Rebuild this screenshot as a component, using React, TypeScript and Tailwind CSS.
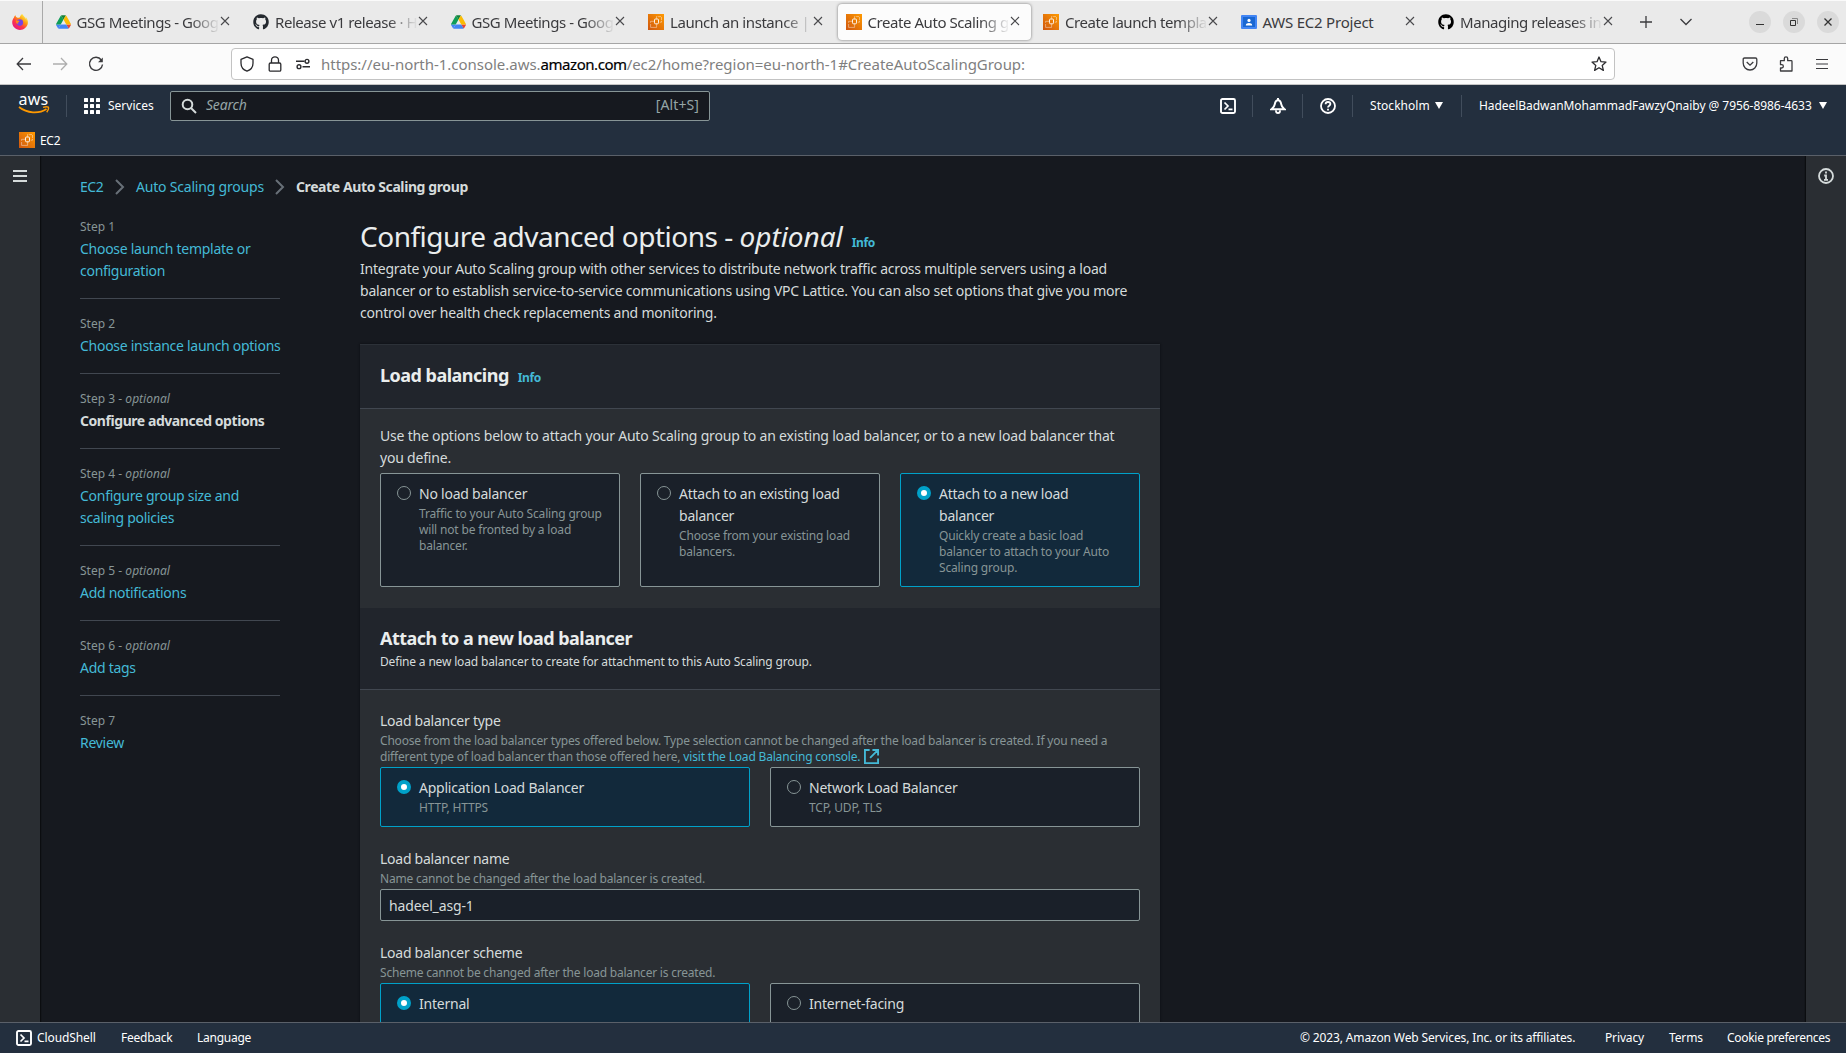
import React from 'react';
import { FaGithub } from 'react-icons/fa';

type IconProps = { className?: string };

function DriveIcon() {
  return (
    <svg viewBox="0 0 87.3 78" className="h-[14px] w-[15px] shrink-0">
      <path d="M6.6 66.85l3.85 6.65c.8 1.4 1.95 2.5 3.3 3.3L27.5 53H0c0 1.55.4 3.1 1.2 4.5z" fill="#4285f4" />
      <path d="M43.65 25L29.9 1.2c-1.35.8-2.5 1.9-3.3 3.3l-25.4 44A9 9 0 0 0 0 53h27.5z" fill="#0f9d58" />
      <path d="M73.55 76.8c1.35-.8 2.5-1.9 3.3-3.3l1.6-2.75L86.1 57.5c.8-1.4 1.2-2.95 1.2-4.5H59.8l5.85 11.5z" fill="#ea4335" />
      <path d="M43.65 25L57.4 1.2C56.05.4 54.5 0 52.9 0H34.4c-1.6 0-3.15.45-4.5 1.2z" fill="#188038" />
      <path d="M59.8 53H27.5L13.75 76.8c1.35.8 2.9 1.2 4.5 1.2h50.8c1.6 0 3.15-.45 4.5-1.2z" fill="#4285f4" />
      <path d="M73.4 26.5L60.7 4.5c-.8-1.4-1.95-2.5-3.3-3.3L43.65 25 59.8 53h27.45c0-1.55-.4-3.1-1.2-4.5z" fill="#fbbc04" />
    </svg>
  );
}

function Ec2Icon() {
  return (
    <svg viewBox="0 0 16 16" className="h-4 w-4 shrink-0">
      <defs>
        <linearGradient id="ec2" x1="0" y1="1" x2="1" y2="0">
          <stop offset="0" stopColor="#cf560f" />
          <stop offset="1" stopColor="#ff9a00" />
        </linearGradient>
      </defs>
      <rect width="16" height="16" fill="url(#ec2)" />
      <g fill="none" stroke="#fff">
        <rect x="6.500" y="5" width="4" height="4.800" rx="1" strokeWidth="0.900" />
        <path d="M8.500 4.800V2.600h5v5.600h-2.800" strokeWidth="0.600" opacity="0.700" strokeDasharray="3 0.800" />
        <path d="M6.300 7.300H2.600v1.500M2.600 10v3.400h6v-3.400" strokeWidth="0.600" opacity="0.700" />
      </g>
    </svg>
  );
}

function ClassroomIcon() {
  return (
    <svg viewBox="0 0 16 14" className="h-[14px] w-4 shrink-0">
      <rect width="16" height="14" rx="1" fill="#4285f4" />
      <rect x="2" y="2" width="12" height="10" fill="#1967d2" />
      <circle cx="8" cy="5.4" r="1.6" fill="#fff" />
      <path d="M4.8 10.4c0-1.7 1.6-2.4 3.2-2.4s3.2.7 3.2 2.4z" fill="#fff" />
    </svg>
  );
}

function FirefoxIcon() {
  return (
    <svg viewBox="0 0 16 16" className="h-4 w-4">
      <defs>
        <linearGradient id="fx" x1="0.85" y1="0.1" x2="0.2" y2="0.95">
          <stop offset="0" stopColor="#fff44f" />
          <stop offset="0.35" stopColor="#ff980e" />
          <stop offset="0.65" stopColor="#ff3647" />
          <stop offset="1" stopColor="#e31587" />
        </linearGradient>
      </defs>
      <path d="M15.3 5.4c-.4-.9-1.1-1.8-1.7-2.1.5 1 .8 1.9.9 2.6C13.600 3.700 12 2.800 10.700.800L10.200 0C8.600 1 8 2.500 7.800 3.500c-.6 0-1.200.200-1.700.4L4.600 3.300C4 3 3.600 2 3.500 1.300 2.600 1.900 2 3 1.900 3.700 1 4.700.300 6.300.2 8c-.2 4.300 3.400 7.900 7.800 7.900 4 0 7.700-3.200 7.900-7.200 0-1.100-.1-2.300-.6-3.300z" fill="url(#fx)" />
      <circle cx="7.800" cy="8.600" r="3.300" fill="#7542e5" />
      <path d="M4 6.200c1 .3 1.900.2 2.700.5 1 .3.600 1.200-.2 1.500-.7.200-.8.900 0 1.500-2 .4-3.200-1.400-2.500-3.500z" fill="#ff8a16" />
    </svg>
  );
}

function CloseX({ className = '' }: IconProps) {
  return (
    <svg viewBox="0 0 10 10" className={`h-[10px] w-[10px] shrink-0 ${className}`}>
      <path d="M1 1l8 8M9 1l-8 8" stroke="#4a4a4d" strokeWidth="1.100" fill="none" />
    </svg>
  );
}

function CloudShellIcon({ className = '' }: IconProps) {
  return (
    <svg viewBox="0 0 16 16" className={`h-4 w-4 shrink-0 ${className}`} fill="none" stroke="#fff" strokeWidth="2">
      <rect x="1" y="1" width="14" height="14" rx="1.500" strokeWidth="1.900" />
      <path d="M4.500 4.500L8 8l-3.500 3.500M8.500 11.300h4" strokeWidth="1.700" />
    </svg>
  );
}

const tabs: { icon: React.ReactNode; title: string; active?: boolean; fade?: boolean }[] = [
  { icon: <DriveIcon />, title: 'GSG Meetings - Goog', fade: true },
  { icon: <FaGithub className="h-4 w-4 shrink-0 text-[#24292f]" />, title: 'Release v1 release · H', fade: true },
  { icon: <DriveIcon />, title: 'GSG Meetings - Goog', fade: true },
  { icon: <Ec2Icon />, title: 'Launch an instance | E', fade: true },
  { icon: <Ec2Icon />, title: 'Create Auto Scaling g', active: true, fade: true },
  { icon: <Ec2Icon />, title: 'Create launch templa', fade: true },
  { icon: <ClassroomIcon />, title: 'AWS EC2 Project' },
  { icon: <FaGithub className="h-4 w-4 shrink-0 text-black" />, title: 'Managing releases in', fade: true },
];

function TabStrip() {
  return (
    <div className="flex h-[44px] shrink-0 border-t border-b border-t-[#fafafa] border-b-[#a5a5a5] bg-[#eaeaea] text-[15px] tracking-[-0.440px] text-[#3b3b3e]">
      <div className="flex w-[43px] shrink-0 items-center border-r border-[#a9a9a9] pl-3">
        <FirefoxIcon />
      </div>
      <div className="flex pl-[2.500px]">
        {tabs.map((t, i) => (
          <div key={i} className="flex w-[197.500px] shrink-0 px-[2px] pt-[3px] pb-[3px]">
            <div
              className={
                t.active
                  ? 'flex min-w-0 flex-1 items-center rounded bg-[#fcfcfc] pr-[11px] pl-2 shadow-[0_0_3px_rgba(0,0,0,0.5)]'
                  : 'flex min-w-0 flex-1 items-center pr-[11px] pl-2'
              }
            >
              {t.icon}
              <span
                className={
                  t.fade
                    ? 'ml-[6px] min-w-0 flex-1 leading-6 whitespace-nowrap [mask-image:linear-gradient(to_left,transparent,black_30px)]'
                    : 'ml-[6px] min-w-0 flex-1 leading-6 tracking-[-0.220px] whitespace-nowrap'
                }
              >
                {t.title}
              </span>
              <CloseX className="mb-[2px]" />
            </div>
          </div>
        ))}
      </div>
      <svg viewBox="0 0 14 14" className="mt-[14px] ml-[13px] h-[14px] w-[14px]">
        <path d="M7 1v12M1 7h12" stroke="#3b3b3e" strokeWidth="1.300" />
      </svg>
      <svg viewBox="0 0 14 14" className="mt-[14px] ml-[26px] h-[14px] w-[14px]">
        <path d="M1.500 4L7 9.500 12.500 4" stroke="#3b3b3e" strokeWidth="1.300" fill="none" />
      </svg>
      <div className="mt-[10px] mr-[7px] ml-auto flex gap-3">
        <span className="flex h-[22px] w-[22px] items-center justify-center rounded-full bg-[#dadada]">
          <svg viewBox="0 0 10 10" className="h-[10px] w-[10px]">
            <path d="M1 7.500h8" stroke="#333" strokeWidth="1" />
          </svg>
        </span>
        <span className="flex h-[22px] w-[22px] items-center justify-center rounded-full bg-[#dadada]">
          <svg viewBox="0 0 10 10" className="h-[10px] w-[10px]" fill="none" stroke="#333">
            <path d="M1.500 3.500h5v5h-5z" />
            <path d="M3 1.500h5.500V7" stroke="#888" />
          </svg>
        </span>
        <span className="flex h-[22px] w-[22px] items-center justify-center rounded-full bg-[#dadada]">
          <svg viewBox="0 0 10 10" className="h-[10px] w-[10px]">
            <path d="M1.500 1.500l7 7M8.500 1.500l-7 7" stroke="#333" strokeWidth="1.300" />
          </svg>
        </span>
      </div>
    </div>
  );
}

function UrlBar() {
  return (
    <div className="flex h-[41px] shrink-0 items-center border-b border-[#c4c4c4] bg-[#fbfbfb] pl-4">
      <svg viewBox="0 0 16 16" className="h-4 w-4" fill="none" stroke="#3b3b3e" strokeWidth="1.300">
        <path d="M15 8H1.500M7 2L1.200 8 7 14" />
      </svg>
      <svg viewBox="0 0 16 16" className="ml-5 h-4 w-4" fill="none" stroke="#aeaeae" strokeWidth="1.300">
        <path d="M1 8h13.500M9 2l5.800 6L9 14" />
      </svg>
      <svg viewBox="0 0 16 16" className="ml-5 h-4 w-4" fill="none" stroke="#3b3b3e" strokeWidth="1.400">
        <path d="M13.300 4A6.500 6.500 0 1 0 14.500 8.500" />
        <path d="M14.800 1.500v4.800H10z" fill="#3b3b3e" stroke="none" />
      </svg>
      <div className="ml-[127px] flex h-8 w-[1384px] items-center rounded border border-[#c3c3c3] bg-white">
        <svg viewBox="0 0 16 16" className="ml-[7px] h-4 w-4" fill="none" stroke="#2b2b2e" strokeWidth="1.300">
          <path d="M8 .8l6 2.500v4c0 3.600-2.600 6.700-6 7.900-3.400-1.200-6-4.300-6-7.900v-4z" strokeLinejoin="round" />
        </svg>
        <svg viewBox="0 0 16 16" className="ml-3 h-4 w-4" fill="none" stroke="#2b2b2e" strokeWidth="1.300">
          <rect x="2.200" y="7" width="11.600" height="8.200" rx="1.300" />
          <path d="M4.500 7V4.300a3.500 3.500 0 0 1 7 0V7" />
        </svg>
        <svg viewBox="0 0 16 12" className="ml-3 h-3 w-4" fill="none" stroke="#2b2b2e" strokeWidth="1.400">
          <path d="M1 3.300h8.500M7.500 8.700H15" />
          <circle cx="12" cy="3.300" r="1.900" />
          <circle cx="4" cy="8.700" r="1.900" />
        </svg>
        <span className="ml-[10px] text-[15px] tracking-[-0.030px] text-[#7f7f7f]">
          https://eu-north-1.console.aws.<span className="tracking-[-0.450px] text-black [-webkit-text-stroke:0.200px_black]">amazon.com</span>/ec2/home?region=eu-north-1#CreateAutoScalingGroup:
        </span>
        <svg viewBox="0 0 16 16" className="mr-[7px] ml-auto h-4 w-4" fill="none" stroke="#2b2b2e" strokeWidth="1.300">
          <path d="M8 1l2 4.700 5 .4-3.800 3.300 1.200 5L8 11.700l-4.400 2.700 1.200-5L1 6.100l5-.4z" strokeLinejoin="round" />
        </svg>
      </div>
      <div className="mr-[17px] ml-auto flex items-center">
        <svg viewBox="0 0 16 16" className="h-4 w-4" fill="none" stroke="#3b3b3e" strokeWidth="1.300">
          <path d="M2.500 2h11c.7 0 1.300.5 1.300 1.200V7c0 4-3 7-6.800 7S1.200 11 1.200 7V3.200C1.200 2.500 1.800 2 2.500 2z" />
          <path d="M4.700 6L8 9.200 11.300 6" />
        </svg>
        <svg viewBox="0 0 16 16" className="ml-[20px] h-4 w-4" fill="none" stroke="#3b3b3e" strokeWidth="1.300">
          <path d="M2.500 4.700h3.800V2.500a1.700 1.700 0 0 1 3.400 0v2.200h3.500c.5 0 .8.300.8.800v9.500H2.500v-3h1.200a1.600 1.600 0 0 0 0-3.300H2.500z" strokeLinejoin="round" />
        </svg>
        <svg viewBox="0 0 14 12" className="ml-[21px] h-3 w-[14px]">
          <path d="M1 1.500h12M1 6h12M1 10.500h12" stroke="#3b3b3e" strokeWidth="1.200" />
        </svg>
      </div>
    </div>
  );
}

function AwsHeader() {
  return (
    <div className="flex h-[71px] shrink-0 flex-col border-b border-[#5a6069] bg-[#232f3e] text-[12px] tracking-[-0.050px] text-white">
      <div className="flex h-[41px] items-center">
        <div className="ml-[18px] flex w-[31px] flex-col items-center">
          <span className="mt-[-5px] h-[14px] text-[16px] leading-[15px] tracking-[0.300px]">aws</span>
          <svg viewBox="0 0 32 8" className="h-2 w-8" fill="none" stroke="#ff9900">
            <path d="M1 1c8 6.500 20 7 27.500 2" strokeWidth="1.700" />
            <path d="M25 1.300c2.500-.7 4.500-.7 5.300-.2.500.900-.2 3.400-1.600 5.200" strokeWidth="1.400" />
          </svg>
        </div>
        <span className="ml-[17px] h-[22px] w-px bg-[#414d5c]" />
        <svg viewBox="0 0 16 16" className="ml-[17px] h-4 w-4" fill="#fff">
          {[0, 6, 12].map((y) => [0, 6, 12].map((x) => <rect key={`${x}-${y}`} x={x} y={y} width="4" height="4" rx="0.500" />))}
        </svg>
        <span className="mt-px ml-2 w-[62px] tracking-[0px]">Services</span>
        <div className="flex h-[30px] w-[540px] items-center rounded-[2px] border border-[#879596] bg-[#16191f] text-[14px] tracking-[-0.200px] text-[#95a5a6]">
          <svg viewBox="0 0 16 16" className="ml-[10px] h-4 w-4" fill="none" stroke="#d5dbdb" strokeWidth="2">
            <circle cx="6.500" cy="6.500" r="4.800" />
            <path d="M10 10l5 5" />
          </svg>
          <span className="mb-px ml-[9px] leading-5 italic">Search</span>
          <span className="mr-[10px] mb-px ml-auto leading-5 tracking-[0.100px]">[Alt+S]</span>
        </div>
        <CloudShellIcon className="ml-[510px]" />
        <span className="ml-4 h-[22px] w-px bg-[#414d5c]" />
        <svg viewBox="0 0 16 16" className="ml-[17px] h-4 w-4" fill="none" stroke="#fff" strokeWidth="2">
          <path d="M8 2.200c-2.200 0-2.900 2-3.200 4C4.500 8.500 3.200 10 1.500 11.200h13C12.800 10 11.500 8.500 11.200 6.200c-.3-2-1-4-3.200-4z" />
          <path d="M8 0v2" />
          <path d="M6 12.300v.7a2 2 0 0 0 4 0v-.7" strokeWidth="1.800" />
        </svg>
        <span className="ml-4 h-6 w-px bg-[#414d5c]" />
        <svg viewBox="0 0 16 16" className="ml-[17px] h-4 w-4" fill="none" stroke="#fff" strokeWidth="1.800">
          <circle cx="8" cy="8" r="7" />
          <path d="M5.600 6.300C5.600 4.800 6.600 4 8 4s2.400.8 2.400 2.100c0 1.500-2.400 1.700-2.400 3.300M8 10.800v1.700" />
        </svg>
        <span className="ml-4 h-[22px] w-px bg-[#414d5c]" />
        <span className="mt-px ml-[17px] w-[59px] tracking-[0.050px]">Stockholm</span>
        <svg viewBox="0 0 8 7" className="ml-[6px] h-[7px] w-2">
          <path d="M0 0h8L4 7z" fill="#fff" />
        </svg>
        <span className="ml-[18px] h-[22px] w-px bg-[#414d5c]" />
        <span className="mt-px ml-[17px] w-[334px] whitespace-nowrap">HadeelBadwanMohammadFawzyQnaiby @ 7956-8986-4633</span>
        <svg viewBox="0 0 8 7" className="ml-[6px] h-[7px] w-2">
          <path d="M0 0h8L4 7z" fill="#fff" />
        </svg>
      </div>
      <div className="mt-px flex h-[26px] items-center pl-[19px]">
        <Ec2Icon />
        <span className="mt-px ml-[5px] tracking-[-0.300px]">EC2</span>
      </div>
    </div>
  );
}

const steps: { n: number; optional?: boolean; title: React.ReactNode; current?: boolean }[] = [
  { n: 1, title: <>Choose launch template or<br />configuration</> },
  { n: 2, title: 'Choose instance launch options' },
  { n: 3, optional: true, title: 'Configure advanced options', current: true },
  { n: 4, optional: true, title: <>Configure group size and<br />scaling policies</> },
  { n: 5, optional: true, title: 'Add notifications' },
  { n: 6, optional: true, title: 'Add tags' },
  { n: 7, title: 'Review' },
];

function Steps() {
  return (
    <div className="w-[200px] shrink-0">
      {steps.map((s, i) => (
        <div key={s.n} className={i === 0 ? '' : 'mt-4 border-t border-[#414750] pt-[14px]'}>
          <div className="text-[12px] leading-[22px] tracking-[0.020px] text-[#879596]">
            Step {s.n}
            {s.optional && <> - <i>optional</i></>}
          </div>
          <div
            className={
              s.current
                ? 'text-[14px] leading-[22px] font-bold tracking-[-0.440px] whitespace-nowrap text-[#d5dbdb]'
                : 'text-[14px] leading-[22px] tracking-[-0.280px] whitespace-nowrap text-[#44b9d6]'
            }
          >
            {s.title}
          </div>
        </div>
      ))}
    </div>
  );
}

function Tile({ title, desc, selected, className = '' }: { title: React.ReactNode; desc?: React.ReactNode; selected?: boolean; className?: string }) {
  return (
    <div
      className={`flex flex-1 rounded-[2px] border pt-[9px] pl-4 ${
        selected ? 'border-[#00a1c9] bg-[#12293b]' : 'border-[#879596] bg-[#1a2029]'
      } ${className}`}
    >
      {selected ? (
        <span className="mt-[3px] h-[14px] w-[14px] shrink-0 rounded-full border-[4px] border-[#00a1c9] bg-white" />
      ) : (
        <span className="mt-[3px] h-[14px] w-[14px] shrink-0 rounded-full border border-[#879596] bg-[#1a2029]" />
      )}
      <div className="ml-2 whitespace-nowrap">
        <div className="text-[14px] leading-[22px] tracking-[-0.230px] text-[#d5dbdb]">{title}</div>
        {desc && <div className="mt-px text-[12px] leading-4 tracking-[-0.170px] text-[#879596]">{desc}</div>}
      </div>
    </div>
  );
}

function Field({ label, hint, children }: { label: string; hint: React.ReactNode; children: React.ReactNode }) {
  return (
    <div>
      <div className="text-[14px] leading-[22px] tracking-[-0.260px] text-[#d5dbdb]">{label}</div>
      <div className="mt-px mb-[2px] text-[12px] leading-4 tracking-[-0.210px] whitespace-nowrap text-[#879596]">{hint}</div>
      {children}
    </div>
  );
}

function Breadcrumbs() {
  return (
    <div className="flex h-[22px] items-center text-[14px] leading-5 tracking-[-0.200px] text-[#44b9d6]">
      <span className="w-[24px] tracking-[-0.500px]">EC2</span>
      <svg viewBox="0 0 16 16" className="ml-2 h-4 w-4" fill="none" stroke="#687078" strokeWidth="2">
        <path d="M4 1l7 7-7 7" />
      </svg>
      <span className="ml-2 w-[128px] whitespace-nowrap">Auto Scaling groups</span>
      <svg viewBox="0 0 16 16" className="ml-2 h-4 w-4" fill="none" stroke="#687078" strokeWidth="2">
        <path d="M4 1l7 7-7 7" />
      </svg>
      <span className="ml-2 font-bold tracking-[-0.400px] whitespace-nowrap text-[#d5dbdb]">Create Auto Scaling group</span>
    </div>
  );
}

function MainContent() {
  return (
    <div className="ml-20 w-[800px] shrink-0">
      <div className="mt-[2px] flex h-9 items-baseline">
        <h1 className="text-[28px] leading-9 tracking-[-0.500px] text-[#eaeded]">
          Configure advanced options - <i className="tracking-[-0.050px]">optional</i>
        </h1>
        <span className="ml-[9px] text-[12px] font-bold tracking-[-0.400px] text-[#44b9d6]">Info</span>
      </div>
      <p className="mt-1 text-[14px] leading-[22px] tracking-[-0.225px] whitespace-nowrap text-[#d5dbdb]">
        Integrate your Auto Scaling group with other services to distribute network traffic across multiple servers using a load
        <br />
        balancer or to establish service-to-service communications using VPC Lattice. You can also set options that give you more
        <br />
        control over health check replacements and monitoring.
      </p>

      <div className="mt-[20px] h-[800px] border-t border-[#2c3138] bg-[#2a2e33] shadow-[0_0_2px_#0b0d10]">
        <div className="flex h-16 items-baseline border-b border-[#414750] bg-[#21252c] px-5 pt-[19px]">
          <h2 className="text-[18px] leading-[22px] font-bold tracking-[-0.510px] text-[#eaeded]">Load balancing</h2>
          <span className="ml-[9px] text-[12px] font-bold tracking-[-0.400px] text-[#44b9d6]">Info</span>
        </div>
        <div className="px-5 pt-4 pb-[21px]">
          <p className="text-[14px] leading-[22px] tracking-[-0.200px] whitespace-nowrap text-[#d5dbdb]">
            Use the options below to attach your Auto Scaling group to an existing load balancer, or to a new load balancer that
            <br />
            you define.
          </p>
          <div className="mt-1 flex h-[114px] gap-5">
            <Tile title="No load balancer" desc={<>Traffic to your Auto Scaling group<br />will not be fronted by a load<br />balancer.</>} />
            <Tile title={<>Attach to an existing load<br />balancer</>} desc={<>Choose from your existing load<br />balancers.</>} />
            <Tile selected title={<>Attach to a new load<br />balancer</>} desc={<>Quickly create a basic load<br />balancer to attach to your Auto<br />Scaling group.</>} />
          </div>
        </div>

        <div className="h-[82px] border-b border-[#414750] bg-[#21252c] px-5 pt-[19px]">
          <h2 className="text-[18px] leading-[22px] font-bold tracking-[-0.530px] text-[#eaeded]">Attach to a new load balancer</h2>
          <p className="mt-[5px] text-[12px] leading-4 tracking-[-0.170px] text-[#d5dbdb]">
            Define a new load balancer to create for attachment to this Auto Scaling group.
          </p>
        </div>

        <div className="flex flex-col gap-[21px] px-5 pt-5">
          <Field
            label="Load balancer type"
            hint={
              <>
                <span className="tracking-[-0.200px]">
                  Choose from the load balancer types offered below. Type selection cannot be changed after the load balancer is created. If you need a
                </span>
                <br />
                <span className="tracking-[-0.180px]">different type of load balancer than those offered here,{' '}</span>
                <span className="tracking-[-0.180px] text-[#44b9d6]">
                  visit the Load Balancing console.
                  <svg viewBox="0 0 16 16" className="-my-1 ml-1 inline-block h-[15px] w-[15px] align-[1px]" fill="none" stroke="#44b9d6" strokeWidth="2">
                    <path d="M6 1H1v14h14v-5M9 1h6v6M15 1L6.500 9.500" />
                  </svg>
                </span>
              </>
            }
          >
            <div className="flex h-[60px] gap-5">
              <Tile selected title="Application Load Balancer" desc="HTTP, HTTPS" />
              <Tile title="Network Load Balancer" desc="TCP, UDP, TLS" />
            </div>
          </Field>
          <Field label="Load balancer name" hint="Name cannot be changed after the load balancer is created.">
            <div className="flex h-8 items-center rounded-[2px] border border-[#879596] bg-[#1a2029] pl-2 text-[14px] tracking-[-0.150px] text-[#d5dbdb]">
              hadeel_asg-1
            </div>
          </Field>
          <Field label="Load balancer scheme" hint="Scheme cannot be changed after the load balancer is created.">
            <div className="flex h-[60px] gap-5">
              <Tile selected title="Internal" />
              <Tile title="Internet-facing" />
            </div>
          </Field>
        </div>
      </div>
    </div>
  );
}

function Footer() {
  return (
    <div className="flex h-[31px] shrink-0 items-center border-t border-[#5a6069] bg-[#232f3e] text-[12px] tracking-[-0.140px] whitespace-nowrap text-white">
      <CloudShellIcon className="ml-4" />
      <span className="ml-[5px] w-[60px] tracking-[-0.100px]">CloudShell</span>
      <span className="ml-6 w-[53px] tracking-[-0.250px]">Feedback</span>
      <span className="ml-[23px] tracking-[-0.250px]">Language</span>
      <span className="ml-auto w-[275px]">© 2023, Amazon Web Services, Inc. or its affiliates.</span>
      <span className="ml-[30px] w-[40px]">Privacy</span>
      <span className="ml-6 w-[34px]">Terms</span>
      <span className="ml-6 w-[104px] tracking-[-0.290px]">Cookie preferences</span>
      <span className="w-[15px]" />
    </div>
  );
}

export default function App() {
  return (
    <div className="flex h-[1053px] w-[1846px] flex-col overflow-hidden bg-[#16191f] font-['Noto_Sans',sans-serif]">
      <TabStrip />
      <UrlBar />
      <AwsHeader />
      <div className="flex min-h-0 flex-1 overflow-hidden">
        <div className="w-10 shrink-0 bg-[#2a2e33] pt-[14px] pl-[13px] shadow-[1px_0_1px_#0b0d10]">
          <svg viewBox="0 0 14 12" className="h-3 w-[14px]">
            <path d="M0 1h14M0 6h14M0 11h14" stroke="#d5dbdb" strokeWidth="2" />
          </svg>
        </div>
        <div className="min-w-0 flex-1 overflow-hidden pt-5 pl-10">
          <Breadcrumbs />
          <div className="mt-[18px] flex">
            <Steps />
            <MainContent />
          </div>
        </div>
        <div className="flex w-10 shrink-0 justify-center bg-[#2a2e33] pt-[12px] shadow-[-1px_0_1px_#0b0d10]">
          <svg viewBox="0 0 16 16" className="h-4 w-4" fill="none" stroke="#d5dbdb" strokeWidth="1.800">
            <circle cx="8" cy="8" r="7" />
            <path d="M8 3.500v2M6.200 7.500H8v4M6 11.800h4" />
          </svg>
        </div>
      </div>
      <Footer />
    </div>
  );
}
